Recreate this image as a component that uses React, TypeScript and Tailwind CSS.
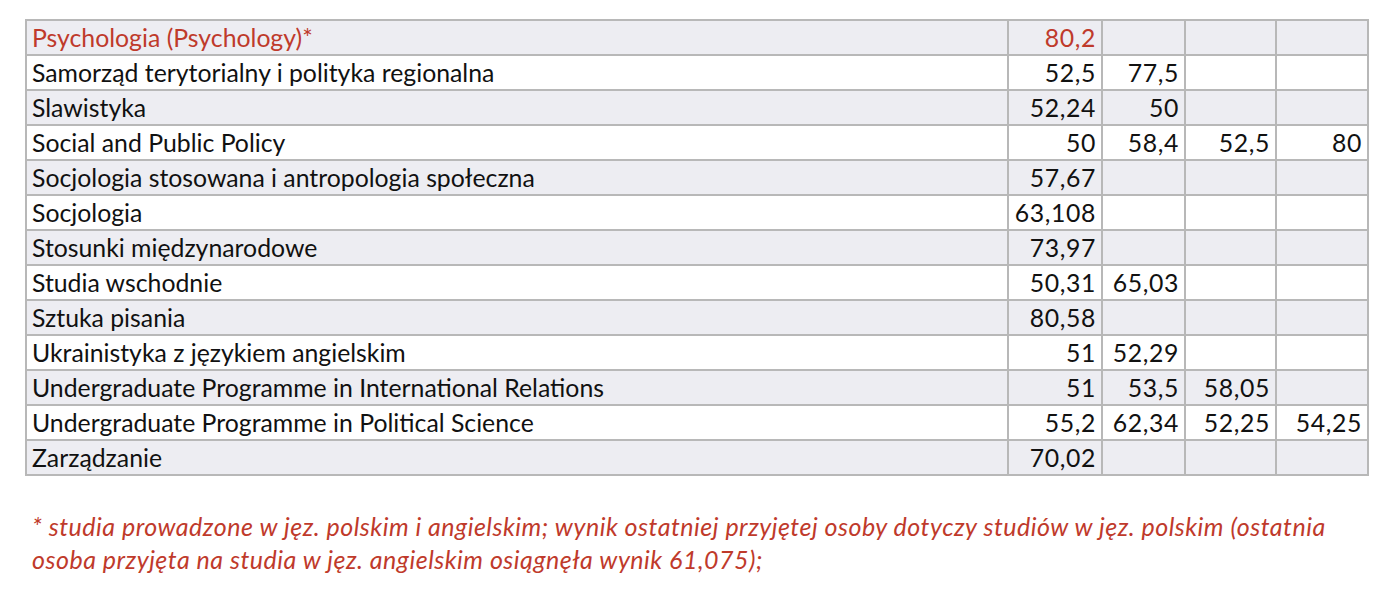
const rows: { name: string; v: string[]; red?: boolean }[] = [
  { name: "Psychologia (Psychology)*", v: ["80,2", "", "", ""], red: true },
  { name: "Samorząd terytorialny i polityka regionalna", v: ["52,5", "77,5", "", ""] },
  { name: "Slawistyka", v: ["52,24", "50", "", ""] },
  { name: "Social and Public Policy", v: ["50", "58,4", "52,5", "80"] },
  { name: "Socjologia stosowana i antropologia społeczna", v: ["57,67", "", "", ""] },
  { name: "Socjologia", v: ["63,108", "", "", ""] },
  { name: "Stosunki międzynarodowe", v: ["73,97", "", "", ""] },
  { name: "Studia wschodnie", v: ["50,31", "65,03", "", ""] },
  { name: "Sztuka pisania", v: ["80,58", "", "", ""] },
  { name: "Ukrainistyka z językiem angielskim", v: ["51", "52,29", "", ""] },
  { name: "Undergraduate Programme in International Relations", v: ["51", "53,5", "58,05", ""] },
  { name: "Undergraduate Programme in Political Science", v: ["55,2", "62,34", "52,25", "54,25"] },
  { name: "Zarządzanie", v: ["70,02", "", "", ""] },
];

const colW = ["w-[982px]", "w-[94px]", "w-[83px]", "w-[91px]", "w-[92px]"];

export default function App() {
  return (
    <div className="min-h-[602px] w-[1396px] bg-white pt-[19px] pl-[25px] font-['Lato',sans-serif] text-[#111]">
      <table className="w-[1343px] table-fixed border-collapse border-2 border-[#a9a9a9]">
        <colgroup>
          {colW.map((w, i) => (
            <col key={i} className={w} />
          ))}
        </colgroup>
        <tbody>
          {rows.map((r, i) => (
            <tr
              key={r.name}
              className={`h-[35px] ${i % 2 === 0 ? "bg-[#ededf2]" : "bg-white"} ${r.red ? "text-[#bf3a2b]" : ""}`}
            >
              <td className="border-2 border-[#b8b8b8] pl-[5px] pt-[1px] text-[24.8px] leading-none whitespace-nowrap">
                {r.name}
              </td>
              {r.v.map((x, j) => (
                <td
                  key={j}
                  className="border-2 border-[#b8b8b8] pr-[5px] pt-[1px] text-right text-[24.8px] leading-none tracking-[0.6px] whitespace-nowrap"
                >
                  {x}
                </td>
              ))}
            </tr>
          ))}
        </tbody>
      </table>
      <p className="mt-[34px] pl-[7px] text-[25px] leading-[33px] italic tracking-[0.5px] text-[#bf3a2b] whitespace-nowrap">
        * studia prowadzone w jęz. polskim i angielskim; wynik ostatniej przyjętej osoby dotyczy studiów w jęz. polskim (ostatnia
        <br />
        osoba przyjęta na studia w jęz. angielskim osiągnęła wynik 61,075);
      </p>
    </div>
  );
}
